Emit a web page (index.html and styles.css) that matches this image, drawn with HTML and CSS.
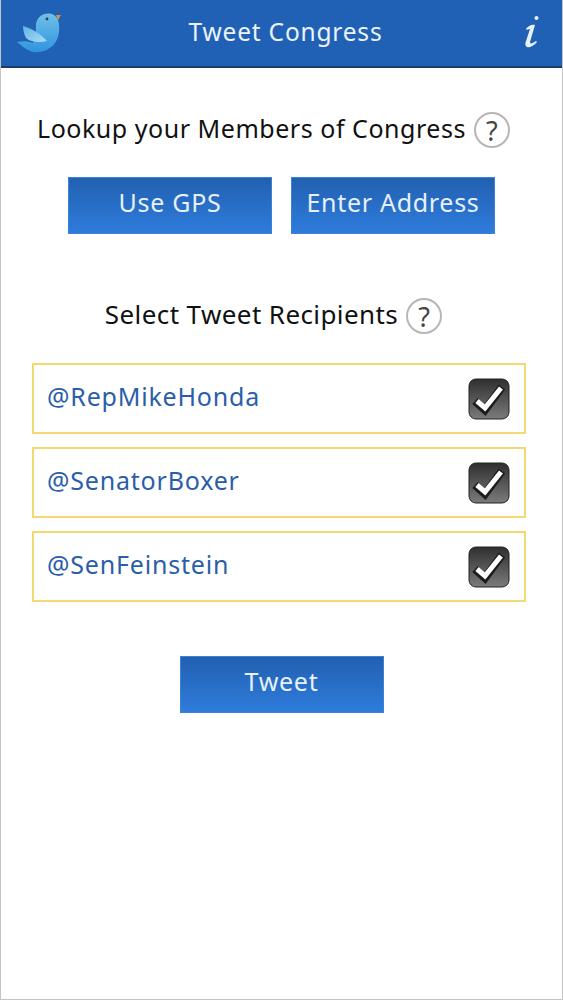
FILE: index.html
```html
<!DOCTYPE html>
<html lang="en">
<head>
<meta charset="utf-8">
<title>Tweet Congress</title>
<link rel="stylesheet" href="styles.css">
</head>
<body>
<div class="app">
  <header class="topbar">
    <svg class="bird" width="46" height="42" viewBox="0 0 46 42">
      <defs>
        <linearGradient id="bodyGrad" x1="0" y1="0" x2="0" y2="1">
          <stop offset="0" stop-color="#6fc0e8"/>
          <stop offset="1" stop-color="#2f94df"/>
        </linearGradient>
        <linearGradient id="wingGrad" x1="0" y1="0" x2="1" y2="1">
          <stop offset="0" stop-color="#5fb4e6"/>
          <stop offset="1" stop-color="#a9dcf2"/>
        </linearGradient>
      </defs>
      <path d="M40 2 L45 2 L42 7 Z" fill="#e08e3a"/>
      <path d="M1 29 C7 28 12 28 17 30 C19 24 20 20 20 11 C21 4 27 0 33 0.500 C38 1 41 4 42 7 C44 13 44 23 39 30 C34 37 25 40 18 39 C11 38 6 33 1 29 Z" fill="url(#bodyGrad)"/>
      <path d="M7 13 C15 15 25 21 31 28 C23 30 14 29 10 25 C8 21 7 17 7 13 Z" fill="url(#wingGrad)"/>
      <circle cx="31" cy="6" r="1.400" fill="#24405f"/>
    </svg>
    <h1 class="title">Tweet Congress</h1>
    <svg class="info" width="16" height="34" viewBox="0 0 16 34">
      <circle cx="11.500" cy="3" r="2" fill="#e8f2fa"/>
      <path d="M1 14 C3 11 7 9 10 10 L5 27 C5 29 7 29 11 26 L12 27 C9 31 4 33 2 32 C0 31 0 28 1 26 L5 14 C3 14 2 15 2 15 Z" fill="#e8f2fa"/>
    </svg>
  </header>

  <main class="content">
    <div class="heading heading-first">
      <span class="heading-text">Lookup your Members of Congress</span>
      <span class="help">?</span>
    </div>
    <div class="actions">
      <button class="btn">Use GPS</button>
      <button class="btn">Enter Address</button>
    </div>

    <div class="heading heading-second">
      <span class="heading-text">Select Tweet Recipients</span>
      <span class="help">?</span>
    </div>

    <ul class="recipients">
      <li class="recipient">
        <span>@RepMikeHonda</span>
        <svg class="check" width="42" height="42" viewBox="0 0 42 42"><use href="#checkbox"/></svg>
      </li>
      <li class="recipient">
        <span>@SenatorBoxer</span>
        <svg class="check" width="42" height="42" viewBox="0 0 42 42"><use href="#checkbox"/></svg>
      </li>
      <li class="recipient">
        <span>@SenFeinstein</span>
        <svg class="check" width="42" height="42" viewBox="0 0 42 42"><use href="#checkbox"/></svg>
      </li>
    </ul>

    <div class="submit">
      <button class="btn">Tweet</button>
    </div>
  </main>
</div>

<svg class="defs" width="0" height="0">
  <defs>
    <linearGradient id="boxGrad" x1="0" y1="0" x2="0" y2="1">
      <stop offset="0" stop-color="#2f2f2f"/>
      <stop offset="1" stop-color="#7b7b7b"/>
    </linearGradient>
    <g id="checkbox">
      <rect x="1" y="1" width="40" height="40" rx="7" fill="url(#boxGrad)" stroke="#222" stroke-width="1"/>
      <path d="M7 23 L17 32 L34 9" fill="none" stroke="#1c1c1c" stroke-width="8"/>
      <path d="M9 23 L17 30 L33 10" fill="none" stroke="#fff" stroke-width="5"/>
    </g>
  </defs>
</svg>
</body>
</html>
```
FILE: styles.css
```css
* { box-sizing: border-box; }
html, body { margin: 0; padding: 0; background: #fff; }
body { font-family: "Noto Sans", "Open Sans", sans-serif; }
.app {
  width: 563px;
  height: 1000px;
  border-left: 1px solid #c4c4c4;
  border-right: 1px solid #c4c4c4;
  border-bottom: 1px solid #c4c4c4;
  overflow: hidden;
}
.topbar {
  margin: 0 -1px;
  height: 68px;
  background: #2161b5;
  border-bottom: 2px solid #1b3c68;
  display: flex;
  align-items: center;
  position: relative;
}
.bird { position: absolute; left: 16px; top: 13px; }
.info { position: absolute; left: 525px; top: 15px; }
.title {
  flex: 1;
  margin: 0;
  padding: 0 0 4px 8px;
  text-align: center;
  color: #eaf3fb;
  font-size: 24.500px;
  font-weight: 400;
  letter-spacing: 0.8px;
}
.content { display: flex; flex-direction: column; }
.heading {
  display: flex;
  align-items: center;
  justify-content: center;
  gap: 8px;
  color: #111;
  height: 36px;
  padding-right: 16px;
}
.heading-text { padding-bottom: 4px; }
.heading-first { margin-top: 44px; font-size: 25px; letter-spacing: 0.53px; }
.heading-second { margin-top: 64px; font-size: 26px; letter-spacing: 0.4px; }
.help {
  width: 36px;
  height: 36px;
  border: 2px solid #b9b4b8;
  border-radius: 50%;
  display: flex;
  align-items: center;
  justify-content: center;
  color: #444;
  font-size: 27px;
  letter-spacing: 0;
}
.actions {
  display: flex;
  justify-content: center;
  gap: 19px;
  margin-top: 29px;
}
.btn {
  width: 204px;
  height: 57px;
  border: 1px solid #3a82da;
  padding: 0 0 8px;
  background: linear-gradient(#2160b0, #2f7cdc);
  color: #e6f0fa;
  font-family: inherit;
  font-size: 25px;
  letter-spacing: 0.7px;
}
.recipients {
  list-style: none;
  margin: 29px 0 0;
  padding: 0 36px 0 31px;
  display: flex;
  flex-direction: column;
  gap: 14px;
}
.recipient {
  height: 71px;
  margin-bottom: -1px;
  border: 2px solid #f3d970;
  padding: 0 14px 6px 13px;
  display: flex;
  align-items: center;
  justify-content: space-between;
  color: #2b5ea8;
  font-size: 25px;
  letter-spacing: 0.8px;
}
.check { margin-top: 6px; }
.submit { display: flex; justify-content: center; margin-top: 55px; }
.defs { position: absolute; }
```
